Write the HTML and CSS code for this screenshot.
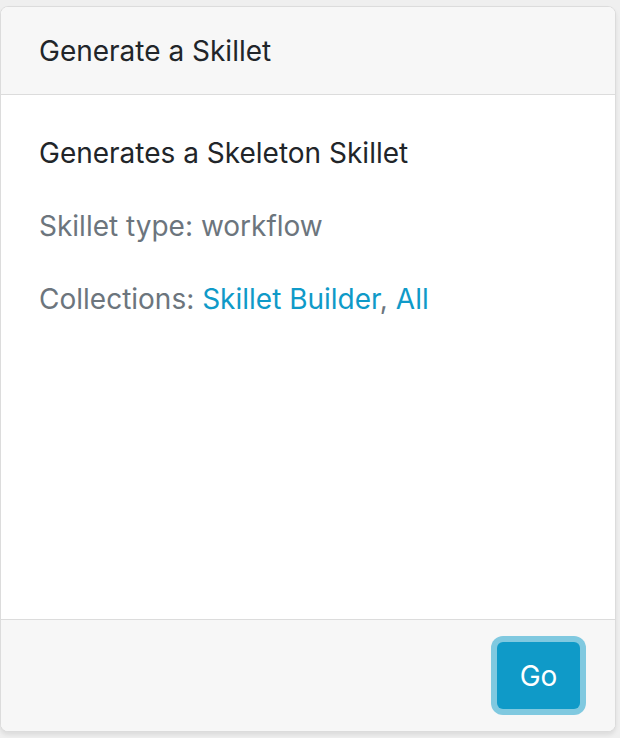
FILE: index.html
```html
<!DOCTYPE html>
<html>
<head>
<meta charset="utf-8">
<link rel="stylesheet" href="styles.css">
</head>
<body>
<div class="card">
  <div class="card-header">Generate a Skillet</div>
  <div class="card-body">
    <p class="title">Generates a Skeleton Skillet</p>
    <p class="muted">Skillet type: workflow</p>
    <p class="muted">Collections: <a href="#">Skillet Builder</a>, <a href="#">All</a></p>
  </div>
  <div class="card-footer">
    <button class="btn">Go</button>
  </div>
</div>
</body>
</html>
```
FILE: styles.css
```css
html, body {
  margin: 0;
  padding: 0;
  background: #efefef;
  height: 738px;
  overflow: hidden;
}
body {
  padding: 6px 3px 0 0;
  box-sizing: border-box;
  font-family: Inter, "Noto Sans", sans-serif;
}
.card {
  width: 616px;
  height: 726px;
  box-sizing: border-box;
  background: #fff;
  border: 1px solid #dcdcdc;
  border-radius: 8px;
  display: flex;
  flex-direction: column;
  overflow: hidden;
  box-shadow: 0 3px 4px rgba(0,0,0,0.08);
}
.card-header {
  height: 88px;
  box-sizing: border-box;
  background: #f7f7f7;
  border-bottom: 1px solid #dcdcdc;
  display: flex;
  align-items: center;
  padding: 0 38px;
  font-size: 28px;
  color: #212529;
}
.card-body {
  flex: 1;
  padding: 40px 38px 0;
}
.card-body p {
  margin: 0 0 36px;
  font-size: 28px;
  line-height: 37px;
}
.title { color: #212529; }
.muted { color: #6c757d; }
.muted a {
  color: #0f9ac8;
  text-decoration: none;
}
.card-footer {
  height: 112px;
  box-sizing: border-box;
  background: #f7f7f7;
  border-top: 1px solid #dcdcdc;
  display: flex;
  justify-content: flex-end;
  align-items: flex-start;
  padding: 22px 35px 0;
}
.btn {
  width: 83px;
  height: 67px;
  border: none;
  border-radius: 6px;
  background: #0f9ac8;
  color: #fff;
  font-family: Inter, "Noto Sans", sans-serif;
  font-size: 28px;
  box-shadow: 0 0 0 6px #80c9e0;
  padding: 0;
}
```
